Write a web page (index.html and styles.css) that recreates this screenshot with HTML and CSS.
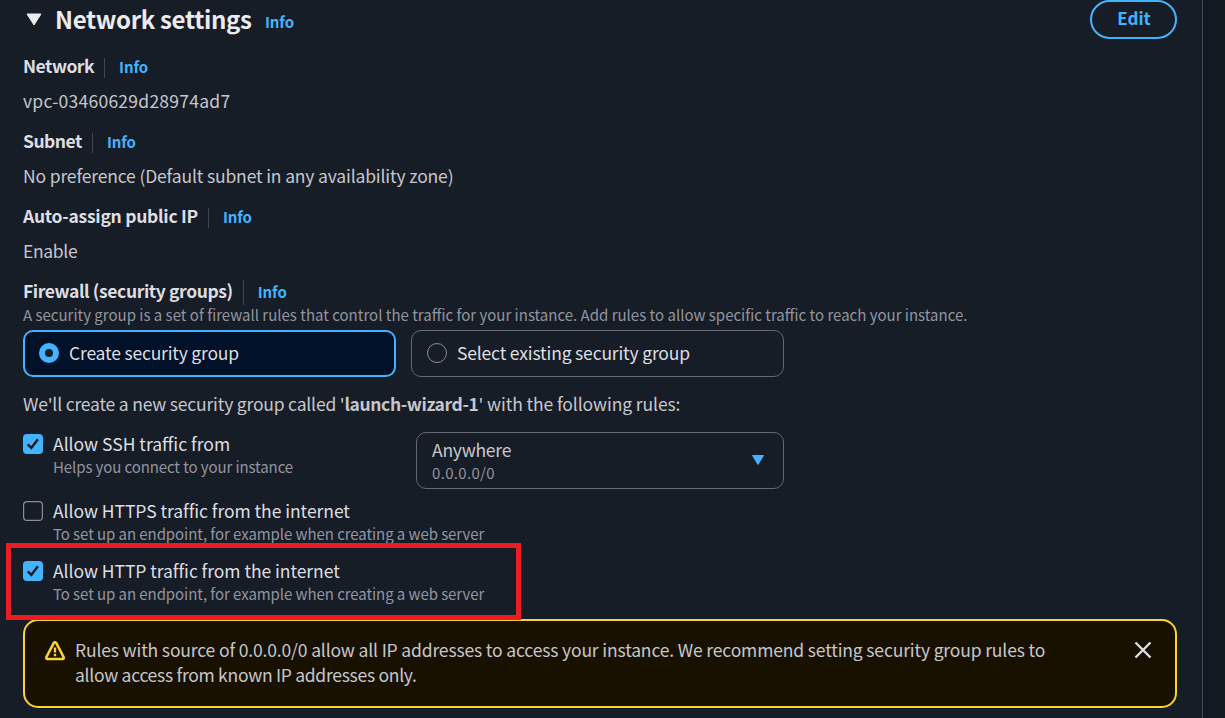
FILE: index.html
```html
<!DOCTYPE html>
<html lang="en">
<head>
<meta charset="utf-8">
<title>Network settings</title>
<link rel="stylesheet" href="styles.css">
</head>
<body>
<main class="panel">
  <header class="header">
    <svg class="caret" viewBox="0 0 16 13"><path d="M1 1h14L8 12z" fill="#ebebf0" stroke="#ebebf0" stroke-linejoin="round"/></svg>
    <h2 class="title">Network settings</h2>
    <a class="info info-title">Info</a>
    <button class="edit">Edit</button>
  </header>

  <section class="field">
    <div class="label-row"><span class="label l-network">Network</span><i class="divider"></i><a class="info">Info</a></div>
    <div class="value v-vpc">vpc-03460629d28974ad7</div>
  </section>
  <section class="field">
    <div class="label-row"><span class="label l-subnet">Subnet</span><i class="divider"></i><a class="info">Info</a></div>
    <div class="value v-subnet">No preference (Default subnet in any availability zone)</div>
  </section>
  <section class="field">
    <div class="label-row"><span class="label l-ip">Auto-assign public IP</span><i class="divider"></i><a class="info">Info</a></div>
    <div class="value v-enable">Enable</div>
  </section>
  <section class="firewall">
    <div class="label-row"><span class="label l-firewall">Firewall (security groups)</span><i class="divider divider-tall"></i><a class="info">Info</a></div>
    <div class="hint h-firewall">A security group is a set of firewall rules that control the traffic for your instance. Add rules to allow specific traffic to reach your instance.</div>
    <div class="tiles">
      <div class="tile selected"><i class="radio"></i><span class="t-create">Create security group</span></div>
      <div class="tile"><i class="radio"></i><span class="t-select">Select existing security group</span></div>
    </div>
  </section>

  <p class="summary"><span class="s-before">We'll create a new security group called '</span><b>launch-wizard-1</b><span class="s-after">' with the following rules:</span></p>

  <div class="rules">
    <div class="rule rule-ssh">
      <svg class="check" viewBox="0 0 20 20"><rect width="20" height="20" rx="4" fill="#42b4ff"/><path d="M4.7 10.3l3.6 3.6 6.6-8.6" fill="none" stroke="#161d26" stroke-width="2.5"/></svg>
      <div class="rule-text"><div class="name n-ssh">Allow SSH traffic from</div><div class="hint h-ssh">Helps you connect to your instance</div></div>
      <div class="select">
        <div><div class="option">Anywhere</div><div class="hint option-hint">0.0.0.0/0</div></div>
        <svg class="select-caret" viewBox="0 0 14 12"><path d="M1.5 1.5h11L7 10.5z" fill="#42b4ff" stroke="#42b4ff" stroke-linejoin="round"/></svg>
      </div>
    </div>
    <div class="rule rule-https">
      <svg class="check" viewBox="0 0 20 20"><rect x=".6" y=".6" width="18.8" height="18.8" rx="3.5" fill="none" stroke="#8c8c94" stroke-width="1.2"/></svg>
      <div class="rule-text"><div class="name n-web">Allow HTTPS traffic from the internet</div><div class="hint h-web">To set up an endpoint, for example when creating a web server</div></div>
    </div>
    <div class="rule rule-http">
      <svg class="check" viewBox="0 0 20 20"><rect width="20" height="20" rx="4" fill="#42b4ff"/><path d="M4.7 10.3l3.6 3.6 6.6-8.6" fill="none" stroke="#161d26" stroke-width="2.5"/></svg>
      <div class="rule-text"><div class="name n-web">Allow HTTP traffic from the internet</div><div class="hint h-web">To set up an endpoint, for example when creating a web server</div></div>
      <div class="highlight"></div>
    </div>
  </div>

  <div class="alert">
    <svg class="warn" viewBox="0 0 20 20"><path d="M8.8 1.9L1.5 15.8q-.8 2.2 1 2.2h15q1.8 0 1-2.2L11.2 1.9q-1.2-1.5-2.4 0z" fill="none" stroke="#fbd332" stroke-width="2.5" stroke-linejoin="round"/><path d="M10 6.5v5M10 12.8v2.4" stroke="#fbd332" stroke-width="2.4"/></svg>
    <div class="alert-text"><div class="a1">Rules with source of 0.0.0.0/0 allow all IP addresses to access your instance. We recommend setting security group rules to</div><div class="a2">allow access from known IP addresses only.</div></div>
    <svg class="close" viewBox="0 0 18 18"><path d="M1.5 1.5l15 15M16.5 1.5l-15 15" stroke="#dedee3" stroke-width="2.4"/></svg>
  </div>
</main>
</body>
</html>
```
FILE: styles.css
```css
* { box-sizing: border-box; }
body {
  margin: 0;
  height: 718px;
  overflow: hidden;
  background: #131920;
  color: #c6c6cd;
  font: 17.5px/25px "Noto Sans CJK SC", "Noto Sans", sans-serif;
  white-space: nowrap;
}
.panel {
  width: 1203px;
  height: 718px;
  padding: 0 25px 0 23px;
  border-right: 1px solid #424650;
  background: #161d26;
}
.header { display: flex; height: 53px; }
.caret { width: 16px; height: 13px; margin: 13px 13px 0 3px; }
.title { width: 197px; margin: 4px 0 0; font-size: 24px; line-height: 30px; color: #ebebf0; font-weight: 700; letter-spacing: -.33px; }
.info { font-size: 15px; font-weight: 700; color: #42b4ff; line-height: 25px; letter-spacing: -.1px; }
.info-title { margin: 9px 0 0 13px; }
.edit {
  width: 87px; height: 39px; margin-left: auto; padding: 0 0 4px 1px;
  border: 2px solid #42b4ff; border-radius: 20px; background: none;
  color: #42b4ff; font: 700 17px/25px "Noto Sans CJK SC", "Noto Sans", sans-serif;
}
.field { height: 75px; }
.label-row { display: flex; height: 25px; }
.label { font-weight: 700; color: #dedee3; }
.divider { width: 1px; height: 20px; margin: 5px 14px 0 10px; background: #424650; }
.divider-tall { height: 25px; margin-top: 2px; }
.label-row .info { padding-top: 1px; }
.l-network, .l-subnet { letter-spacing: -.5px; }
.l-ip { letter-spacing: -.27px; }
.l-firewall { letter-spacing: -.39px; }
.value { margin-top: 10px; }
.v-vpc { letter-spacing: .25px; }
.v-subnet { letter-spacing: -.155px; }
.v-enable { letter-spacing: -.33px; }
.hint { font-size: 15px; line-height: 20px; color: #9494a0; }
.h-firewall { margin-top: 2px; }
.tiles { display: flex; gap: 15px; margin-top: 5px; }
.tile {
  display: flex; width: 373px; height: 47px; padding: 9px 15px;
  border: 1px solid #656871; border-radius: 10px; color: #dedee3;
}
.radio { width: 20px; height: 20px; margin: 3px 10px 0 0; border: 1px solid #8c8c94; border-radius: 50%; }
.selected { padding: 8px 14px; border: 2px solid #42b4ff; background: #001129; }
.selected .radio { border: 6px solid #42b4ff; background: #161d26; }
.t-create { letter-spacing: -.19px; }
.t-select { letter-spacing: -.17px; }
.summary { margin: 14px 0 0; height: 41px; }
.summary b { letter-spacing: -.4px; }
.s-before { letter-spacing: -.19px; }
.s-after { letter-spacing: -.1px; }
.rule { display: flex; position: relative; }
.rule-ssh { height: 67px; }
.rule-https { height: 60px; }
.rule-http { height: 60px; }
.check { flex: none; width: 20px; height: 20px; margin: 2px 10px 0 0; }
.rule-text { width: 363px; }
.name { height: 25px; line-height: 23px; color: #dedee3; }
.n-web { letter-spacing: -.05px; }
.h-ssh { letter-spacing: -.1px; }
.h-web { letter-spacing: -.07px; }
.select {
  display: flex; justify-content: space-between; width: 368px; height: 57px;
  padding: 5px 18px 0 15px; border: 1px solid #656871; border-radius: 10px;
}
.option { height: 25px; line-height: 23px; letter-spacing: -.25px; }
.option-hint { letter-spacing: .33px; }
.select-caret { width: 14px; height: 12px; margin-top: 16px; }
.highlight { position: absolute; left: -17px; top: -16px; width: 515px; height: 77px; border: 5px solid #ed1c24; }
.alert {
  display: flex; height: 89px; padding: 16px 23px 0 20px;
  border: 2px solid #fbd332; border-radius: 15px; background: #191100;
}
.warn { flex: none; width: 20px; height: 20px; margin: 4px 10px 0 0; }
.alert-text { flex: 1; }
.a1 { letter-spacing: -.15px; }
.a2 { letter-spacing: -.28px; }
.close { width: 18px; height: 18px; margin-top: 4px; }
```
